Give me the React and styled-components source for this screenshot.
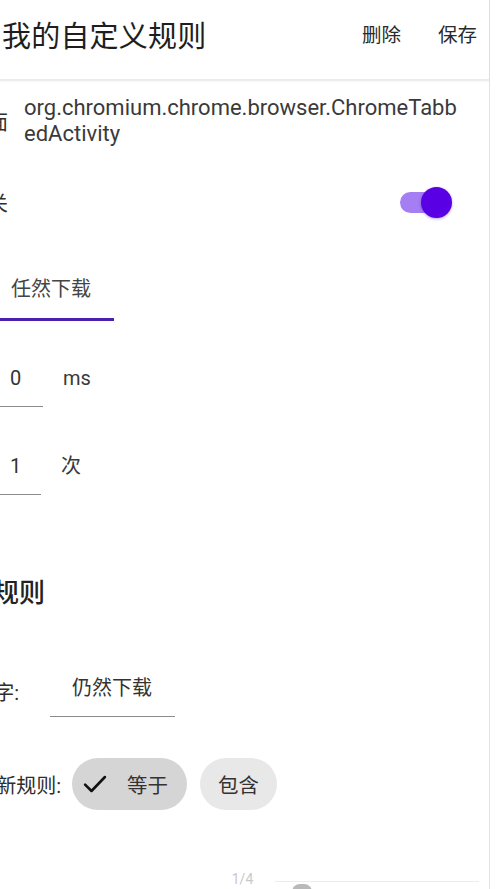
import styled, { createGlobalStyle } from 'styled-components';

const GlobalStyle = createGlobalStyle`
html, body {
    margin: 0;
    padding: 0;
    background: #ffffff;
    overflow: hidden;
}
body {
    font-family: Roboto, "Noto Sans CJK SC", sans-serif;
    color: #333333;
}
`;

const CJK = `Roboto, "Noto Sans CJK SC", sans-serif`;

const App = () => {
    return (
        <Screen>
            <GlobalStyle />
            <Frame>
                <Header>
                    <Title>我的自定义规则</Title>
                    <Actions>
                        <Action>删除</Action>
                        <Action>保存</Action>
                    </Actions>
                </Header>

                <InfoRow>
                    <Label $w={108}>页面</Label>
                    <ActivityName>
                        org.chromium.chrome.browser.ChromeTabb<br />edActivity
                    </ActivityName>
                </InfoRow>

                <SwitchRow>
                    <Label $w={108}>开关</Label>
                    <Toggle>
                        <Track />
                        <Thumb />
                    </Toggle>
                </SwitchRow>

                <Tabs>
                    <Tab $active>任然下载</Tab>
                </Tabs>

                <FieldRow $top={46}>
                    <Label $w={80}>延迟</Label>
                    <Field $w={63}>0</Field>
                    <Unit>ms</Unit>
                </FieldRow>

                <FieldRow $top={48}>
                    <Label $w={80}>重试</Label>
                    <Field $w={61}>1</Field>
                    <Unit>次</Unit>
                </FieldRow>

                <SectionTitle>匹配规则</SectionTitle>

                <FieldRow $top={68}>
                    <Label $w={119}>关键字:</Label>
                    <Field $w={125} $pad={22} $gap={31}>仍然下载</Field>
                </FieldRow>

                <ChipRow>
                    <Label $w={161}>更新规则:</Label>
                    <Chip $selected>
                        <svg width="28" height="28" viewBox="0 0 24 24" fill="none">
                            <path d="M3.5 12.5l5.5 5.5L20.5 6" stroke="#111" strokeWidth="2.2" strokeLinecap="round" strokeLinejoin="round" />
                        </svg>
                        等于
                    </Chip>
                    <Chip>包含</Chip>
                </ChipRow>

                <Footer>
                    <Pager>1/4</Pager>
                    <Peek>
                        <PeekDot />
                    </Peek>
                </Footer>
            </Frame>
        </Screen>
    )
}

const Screen = styled.div`
width: 500px;
height: 889px;
overflow: hidden;
background: #ffffff;
`;

const Frame = styled.div`
margin-left: -100px;
width: 589px;
height: 889px;
border-right: 1px solid #e2e2e2;
display: flex;
flex-direction: column;
`;

const Header = styled.header`
height: 79px;
display: flex;
align-items: center;
justify-content: space-between;
padding-left: 102px;
padding-right: 11px;
border-bottom: 2px solid #ececec;
box-shadow: 0 1px 2px rgba(0, 0, 0, 0.04);
`;

const Title = styled.h1`
margin: 0;
margin-top: -12px;
font-family: ${CJK};
font-size: 29px;
font-weight: 400;
color: #1e1e1e;
letter-spacing: 0.2px;
`;

const Actions = styled.div`
display: flex;
gap: 37px;
margin-top: -12px;
margin-right: 1px;
`;

const Action = styled.span`
font-family: ${CJK};
font-size: 19.5px;
color: #2a2a2a;
`;

const Label = styled.div`
width: ${p => p.$w}px;
flex-shrink: 0;
text-align: right;
font-family: ${CJK};
font-size: 20px;
color: #2e2e2e;
`;

const InfoRow = styled.div`
display: flex;
align-items: center;
gap: 16px;
margin-top: 14px;
`;

const ActivityName = styled.div`
font-family: ${CJK};
font-size: 22px;
line-height: 26px;
color: #3a3a3a;
`;

const SwitchRow = styled.div`
display: flex;
align-items: center;
justify-content: space-between;
padding-right: 37px;
margin-top: 35px;
height: 40px;
`;

const Toggle = styled.div`
position: relative;
width: 52px;
height: 32px;
display: flex;
align-items: center;
`;

const Track = styled.div`
width: 48px;
height: 21px;
border-radius: 11px;
background: #a47ef2;
`;

const Thumb = styled.div`
position: absolute;
right: 0;
top: 1px;
width: 31px;
height: 31px;
border-radius: 50%;
background: #5a00e4;
box-shadow: 0 1px 3px rgba(60, 0, 160, 0.35);
`;

const Tabs = styled.div`
display: flex;
padding-left: 88px;
margin-top: 45px;
`;

const Tab = styled.div`
width: 126px;
text-align: center;
font-family: ${CJK};
font-size: 20px;
color: #444444;
padding: 6px 0 16px;
border-bottom: 3px solid ${p => p.$active ? '#4d1fb0' : 'transparent'};
`;

const FieldRow = styled.div`
display: flex;
align-items: flex-start;
margin-top: ${p => p.$top}px;
`;

const Field = styled.div`
width: ${p => p.$w}px;
box-sizing: border-box;
margin-left: ${p => p.$gap || 0}px;
padding-left: ${p => p.$pad || 30}px;
padding-bottom: 16px;
border-bottom: 1.5px solid #8a8a8a;
font-family: ${CJK};
font-size: 20px;
line-height: 23px;
color: #333333;
`;

const Unit = styled.div`
margin-left: 20px;
font-family: ${CJK};
font-size: 20px;
line-height: 23px;
color: #3a3a3a;
`;

const SectionTitle = styled.h2`
margin: 77px 0 0;
padding-left: 41px;
font-family: ${CJK};
font-size: 26px;
font-weight: 500;
color: #222222;
`;

const ChipRow = styled.div`
display: flex;
align-items: center;
margin-top: 41px;
`;

const Chip = styled.div`
height: 52px;
box-sizing: border-box;
display: flex;
align-items: center;
gap: 18px;
padding: ${p => p.$selected ? '0 19px 0 9px' : '0 18px'};
margin-left: ${p => p.$selected ? 11 : 13}px;
border-radius: 26px;
background: ${p => p.$selected ? '#d5d5d5' : '#e8e8e8'};
font-family: ${CJK};
font-size: 20.5px;
color: #333333;
`;

const Footer = styled.div`
position: relative;
flex: 1;
display: flex;
align-items: flex-end;
justify-content: center;
padding-left: 100px;
`;

const Pager = styled.div`
font-family: ${CJK};
font-size: 14px;
color: #c9c9c9;
margin-bottom: 2px;
margin-right: 4px;
`;

const Peek = styled.div`
position: absolute;
left: 375px;
right: 10px;
bottom: -10px;
height: 17px;
border-top: 1px solid #ececec;
`;

const PeekDot = styled.div`
position: absolute;
left: 17px;
top: 2px;
width: 20px;
height: 12px;
border-radius: 8px 8px 0 0;
background: #8a8a8a;
opacity: 0.6;
`;

export default App;
